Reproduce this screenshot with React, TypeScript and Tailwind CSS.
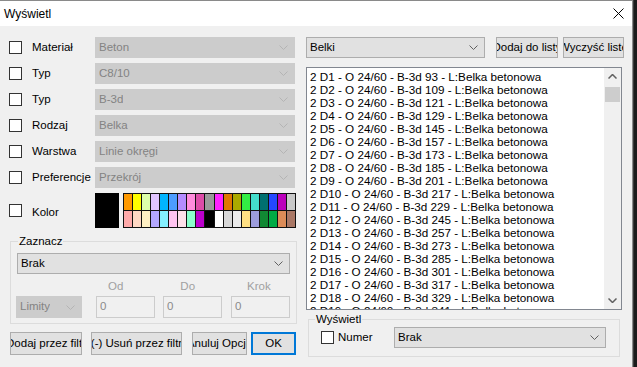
import { ReactNode } from 'react'

const font = { fontFamily: '"Liberation Sans", Arial, sans-serif' }

const palette = [
  '#ff9900', '#ffff00', '#ddffaa', '#e0c4ff', '#00b4ff', '#4c9cff', '#b48cff', '#ff8cdc', '#dc4ca8', '#9a9a9a',
  '#ff22ff', '#e07800', '#aaaa00', '#33ee44', '#44ddcc', '#007070', '#2448ff', '#bb00bb', '#c8c8c8',
  '#ffaaaa', '#ffd8c4', '#fff0c4', '#b4a8ff', '#84f0ff', '#ffc4f0', '#ffe0ea', '#8cffcc', '#bb00cc', '#000000',
  '#ffffff', '#d8d8d8', '#ececec', '#ffe084', '#9c9cdc', '#118833', '#00aa44', '#dc8c58', '#aa7866',
]

const items = [93, 109, 121, 129, 145, 157, 173, 185, 201, 217, 229, 245, 257, 273, 285, 301, 317, 329, 341]

function Chevron({ color }: { color: string }) {
  return (
    <svg width="9" height="5" viewBox="0 0 9 5" className="shrink-0">
      <path d="M0.5 0.5 L4.5 4.5 L8.5 0.5" fill="none" stroke={color} strokeWidth="1" />
    </svg>
  )
}

function Combo({ value, disabled = false, className = '' }: { value: string; disabled?: boolean; className?: string }) {
  return (
    <div
      className={
        'flex items-center justify-between border pl-[3px] pr-[6px] text-[11.5px] ' +
        (disabled
          ? 'border-[#cccccc] bg-[#cccccc] text-[#838383] '
          : 'border-[#adadad] bg-[#e1e1e1] text-black ') +
        className
      }
    >
      <span className="truncate">{value}</span>
      <Chevron color={disabled ? '#b4b4b4' : '#606060'} />
    </div>
  )
}

function Check() {
  return <div className="h-[13px] w-[13px] shrink-0 border border-[#333333] bg-white" />
}

function Button({ children, className = '' }: { children: ReactNode; className?: string }) {
  return (
    <div
      className={
        'flex items-center justify-center overflow-hidden whitespace-nowrap border border-[#adadad] bg-[#e1e1e1] text-[11.5px] text-black ' +
        className
      }
    >
      <span className="shrink-0">{children}</span>
    </div>
  )
}

function FilterRow({ label, value }: { label: string; value: string }) {
  return (
    <div className="flex h-[21px] items-center">
      <Check />
      <span className="ml-[10px] w-[63px] text-[11.5px] text-black">{label}</span>
      <Combo value={value} disabled className="h-[21px] w-[200px]" />
    </div>
  )
}

export default function App() {
  return (
    <div className="flex h-[367px] w-[637px] overflow-hidden bg-[#1b1b1b]" style={font}>
      {/* Dialog */}
      <div className="flex w-[633px] shrink-0 flex-col border-r border-[#8c8c8c] bg-[#f0f0f0]">
        {/* Title bar */}
        <div className="flex h-[26px] shrink-0 items-center justify-between border-t border-[#8a8a8a] bg-white pl-[4px] pr-[8px]">
          <span className="text-[12px] text-black">Wyświetl</span>
          <svg width="11" height="11" viewBox="0 0 11 11">
            <path d="M0.5 0.5 L10.5 10.5 M10.5 0.5 L0.5 10.5" stroke="#000" strokeWidth="1" />
          </svg>
        </div>

        {/* Body */}
        <div className="flex flex-1 pt-[11px]">
          {/* Left column */}
          <div className="flex w-[297px] shrink-0 flex-col pl-[9px]">
            <div className="flex flex-col gap-[5px]">
              <FilterRow label="Materiał" value="Beton" />
              <FilterRow label="Typ" value="C8/10" />
              <FilterRow label="Typ" value="B-3d" />
              <FilterRow label="Rodzaj" value="Belka" />
              <FilterRow label="Warstwa" value="Linie okręgi" />
              <FilterRow label="Preferencje" value="Przekrój" />

              {/* Kolor */}
              <div className="flex h-[35px] items-center">
                <Check />
                <span className="ml-[10px] w-[63px] pt-[4px] text-[11.5px] text-black">Kolor</span>
                <div className="h-[35px] w-[24px] bg-black" />
                <div className="ml-[4px] grid h-[35px] w-[173px] grid-cols-[repeat(19,minmax(0,1fr))] gap-[1px] bg-[#111] p-[1px]">
                  {palette.map((c, i) => (
                    <div key={i} style={{ backgroundColor: c }} />
                  ))}
                </div>
              </div>
            </div>

            {/* Zaznacz */}
            <fieldset className="mt-[6px] ml-[1px] h-[90px] w-[284px] border border-[#dcdcdc] px-[6px]">
              <legend className="ml-[1px] px-[1px] text-[11.5px] leading-[14px] text-black">Zaznacz</legend>
              <Combo value="Brak" className="mt-[5px] h-[21px] w-[273px]" />
              <div className="mt-[6px] flex h-[13px] text-[11.5px] leading-[13px] text-[#a0a0a0]">
                <span className="ml-[91px]">Od</span>
                <span className="ml-[57px]">Do</span>
                <span className="ml-[52px]">Krok</span>
              </div>
              <div className="mt-[3px] -ml-[1px] flex h-[22px] items-center">
                <Combo value="Limity" disabled className="h-[22px] w-[66px]" />
                <div className="ml-[14px] flex h-[22px] w-[59px] items-center border border-[#cccccc] pl-[3px] text-[11.5px] text-[#8a8a8a]">0</div>
                <div className="ml-[8px] flex h-[22px] w-[59px] items-center border border-[#cccccc] pl-[3px] text-[11.5px] text-[#8a8a8a]">0</div>
                <div className="ml-[9px] flex h-[22px] w-[59px] items-center border border-[#cccccc] pl-[3px] text-[11.5px] text-[#8a8a8a]">0</div>
              </div>
            </fieldset>

            {/* Buttons */}
            <div className="mt-[8px] flex h-[23px] items-stretch">
              <Button className="ml-[1px] w-[72px]">Dodaj przez filtr</Button>
              <Button className="ml-[9px] w-[91px]">(-) Usuń przez filtr</Button>
              <Button className="ml-[10px] w-[55px]">Anuluj Opcje</Button>
              <div className="ml-[4px] flex w-[45px] items-center justify-center border-2 border-[#0078d7] bg-[#e1e1e1] text-[11.5px] text-black">
                OK
              </div>
            </div>
          </div>

          {/* Right column */}
          <div className="flex flex-col pl-[9px]">
            <div className="flex h-[21px] items-stretch">
              <Combo value="Belki" className="w-[179px]" />
              <Button className="ml-[11px] w-[62px]">Dodaj do listy</Button>
              <Button className="ml-[5px] w-[61px]">Wyczyść listę</Button>
            </div>

            {/* List */}
            <div className="mt-[9px] flex h-[243px] w-[316px] overflow-hidden border border-[#828790] bg-white">
              <div className="flex-1 overflow-hidden pl-[3px] pt-[2px]">
                {items.map((n, i) => (
                  <div key={i} className="h-[13px] whitespace-nowrap text-[11.7px] leading-[13px] text-black">
                    {`2 D${i + 1} - O 24/60 - B-3d ${n} - L:Belka betonowa`}
                  </div>
                ))}
              </div>
              <div className="flex w-[17px] flex-col items-center bg-[#f0f0f0]">
                <div className="flex h-[17px] items-center justify-center">
                  <svg width="9" height="5" viewBox="0 0 9 5">
                    <path d="M0.5 4.5 L4.5 0.5 L8.5 4.5" fill="none" stroke="#606060" strokeWidth="1.5" />
                  </svg>
                </div>
                <div className="mt-[2px] h-[15px] w-[15px] bg-[#cdcdcd]" />
                <div className="flex-1" />
                <div className="flex h-[17px] items-center justify-center">
                  <svg width="9" height="5" viewBox="0 0 9 5">
                    <path d="M0.5 0.5 L4.5 4.5 L8.5 0.5" fill="none" stroke="#606060" strokeWidth="1.5" />
                  </svg>
                </div>
              </div>
            </div>

            {/* Wyświetl group */}
            <fieldset className="mt-[2px] ml-[2px] h-[45px] w-[312px] border border-[#dcdcdc] px-[12px]">
              <legend className="ml-[-6px] px-[1px] text-[11.5px] leading-[14px] text-black">Wyświetl</legend>
              <div className="mt-[1px] flex h-[21px] items-center">
                <Check />
                <span className="ml-[4px] w-[56px] text-[11.5px] text-black">Numer</span>
                <Combo value="Brak" className="h-[21px] w-[212px]" />
              </div>
            </fieldset>
          </div>
        </div>
      </div>

      {/* Background behind the dialog */}
      <div className="w-[4px] border-l border-[#3a3a3a] bg-[#1b1b1b]" />
    </div>
  )
}
